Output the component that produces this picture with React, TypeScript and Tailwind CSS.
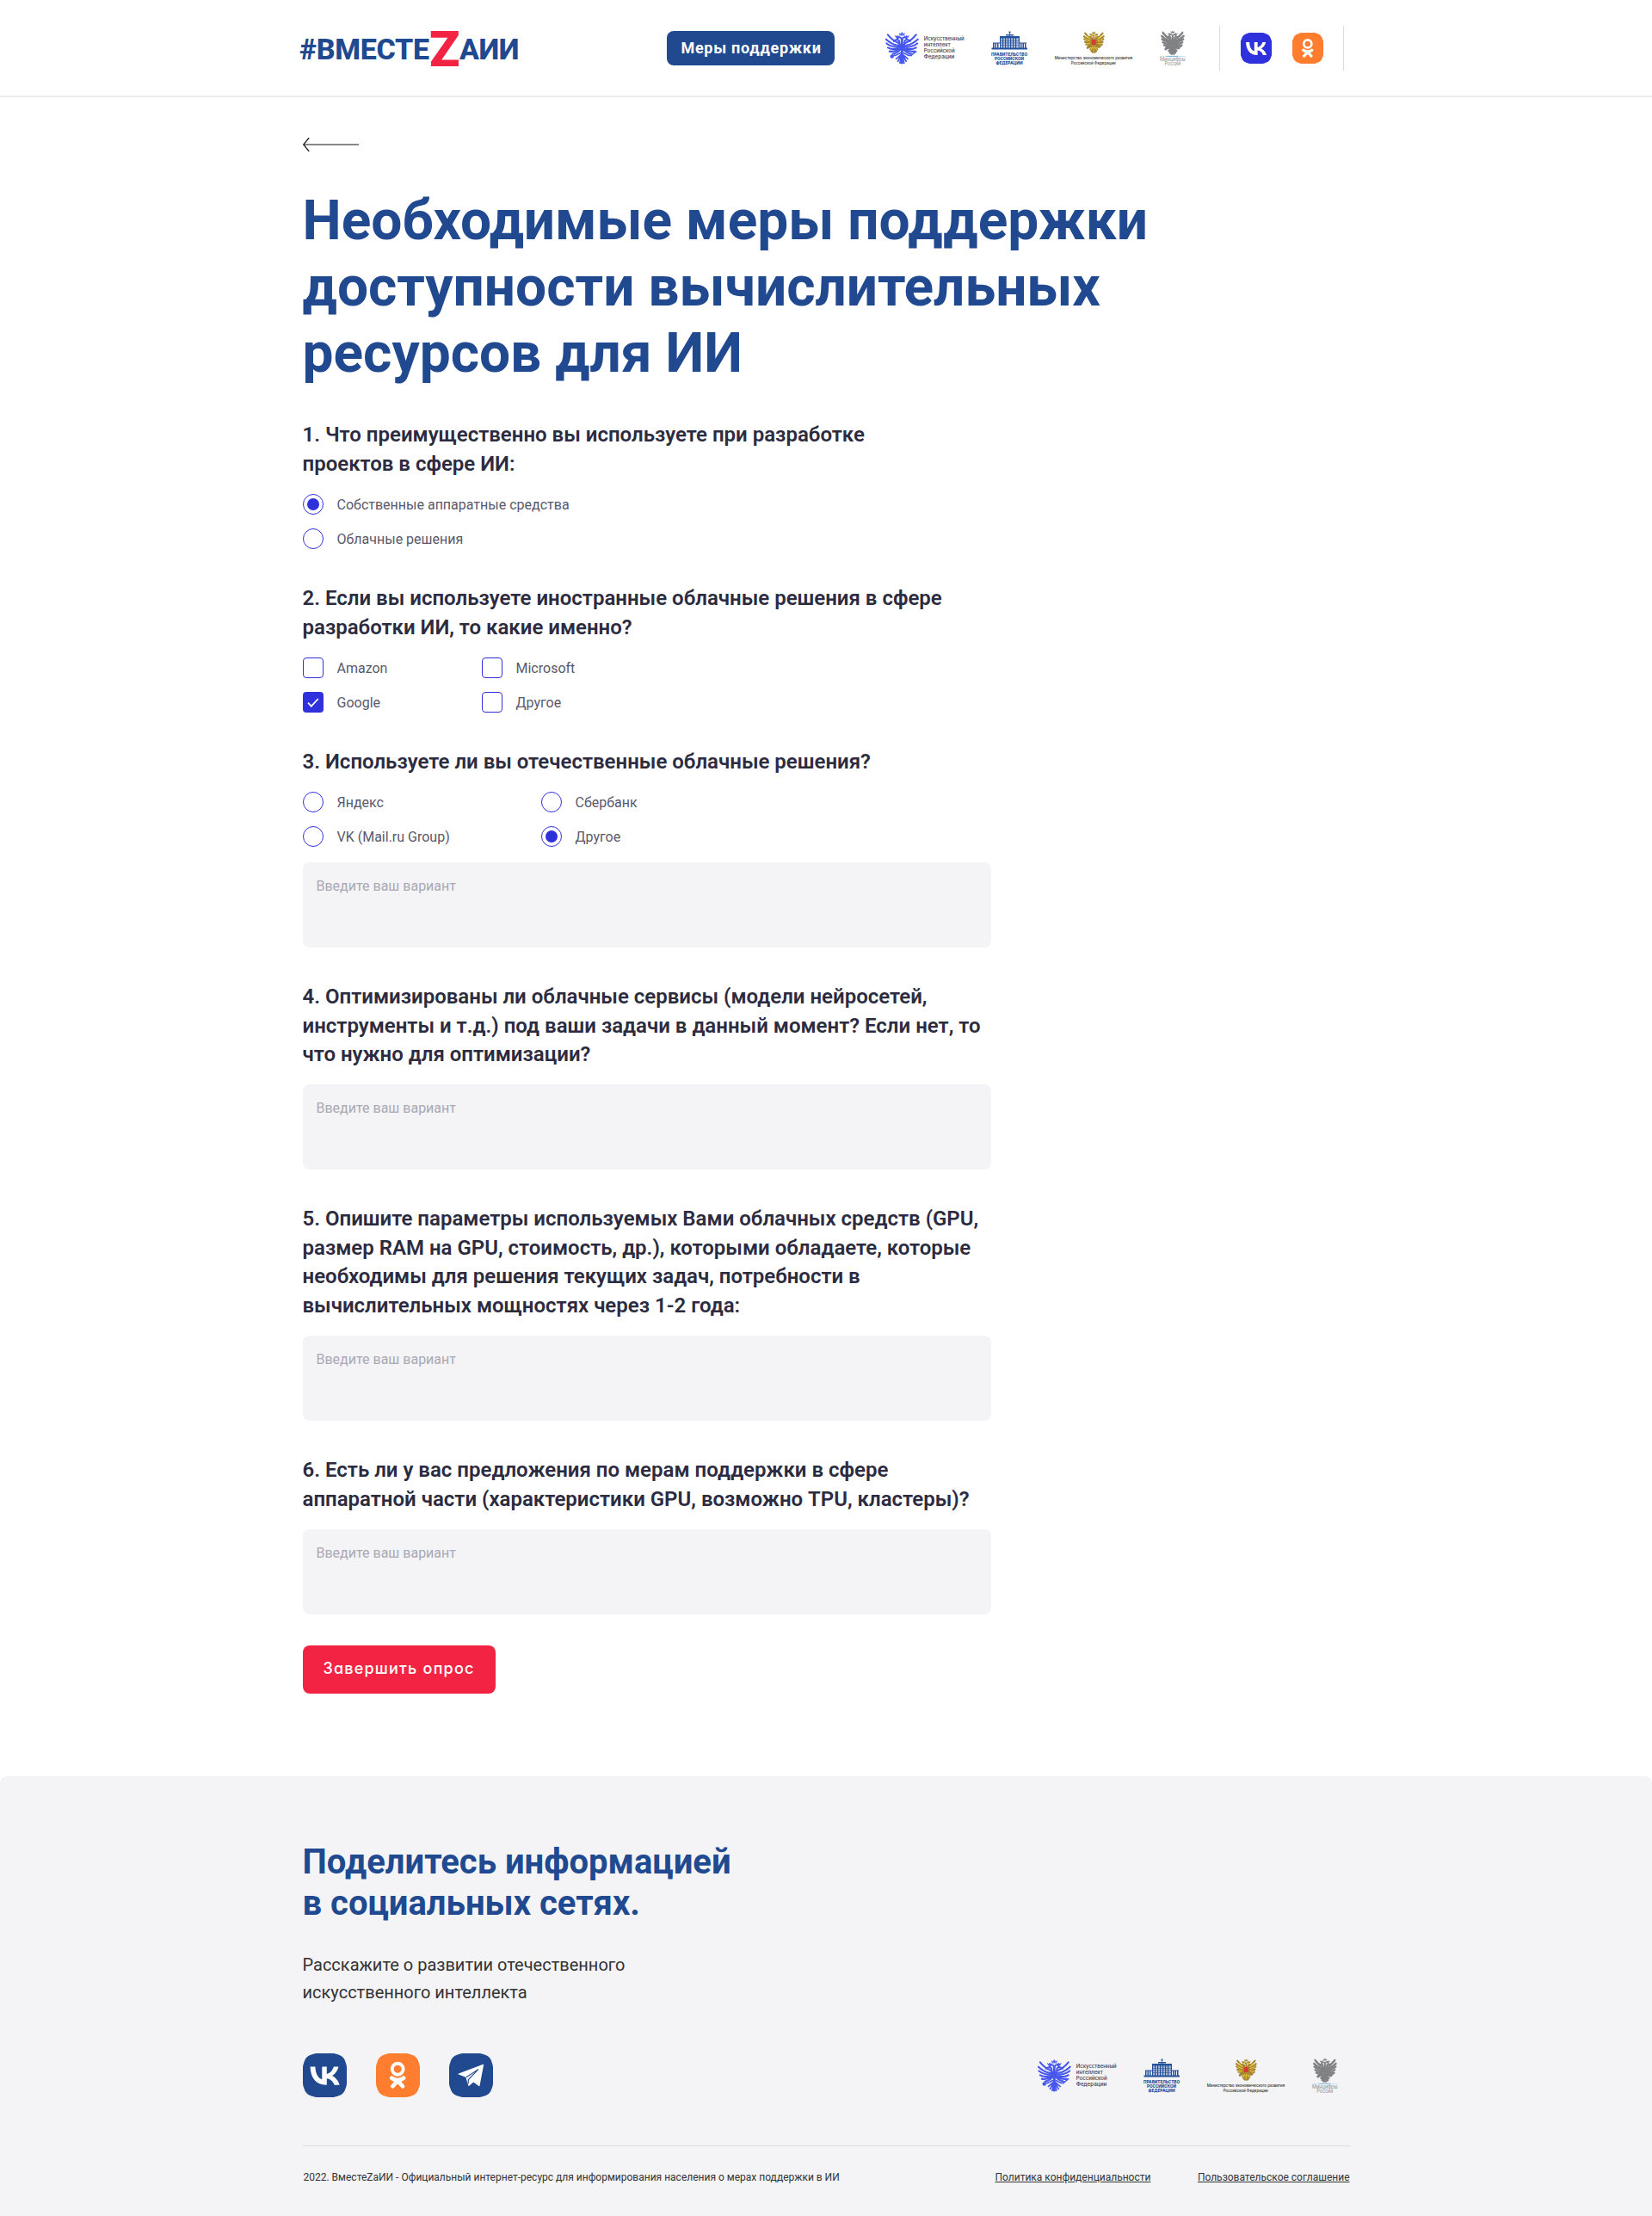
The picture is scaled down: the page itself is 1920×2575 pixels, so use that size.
import React from "react";

const FEATHERS: [number, number, number, number][] = [
  [16, 14, 3, 4],
  [15, 17, 1, 9.5],
  [15, 19, 1.5, 14.5],
  [15, 21, 3, 19.5],
  [16, 22, 5, 24],
  [17, 23, 9, 27],
];

/** Double-headed eagle emblem on a 40x40 grid. */
function Eagle({
  color,
  accent,
  center,
  bold,
}: {
  color: string;
  accent?: string;
  center?: string;
  bold?: boolean;
}) {
  const half = (
    <g>
      {FEATHERS.map(([x1, y1, x2, y2]) => (
        <path
          key={y2}
          d={`M${x1} ${y1}Q${(x1 + x2) / 2 - 1} ${(y1 + y2) / 2 + 2} ${x2} ${y2}`}
          fill="none"
          strokeWidth={bold ? 3.4 : 2.2}
        />
      ))}
      <path d="M17 22V13c0-2-1-3-3-3.200-2 .3-3 1-4 2M14 9.500c1-2.500 3.500-3 5-1.500l1 4" strokeWidth="2" fill="none" />
      <path d="M12 5.500l1 2h3l1-2-1.500.8-1-1.500-1 1.500z" strokeWidth=".8" />
      <path
        d="M18 26l-6 3-3 0M19 28l-6 5M19 29l-4 7M19.500 30l-2 8"
        strokeWidth={bold ? 3 : 1.8}
        fill="none"
      />
    </g>
  );
  return (
    <g stroke={color} fill={color} strokeLinecap="round">
      {half}
      <g transform="translate(40 0) scale(-1 1)">{half}</g>
      <path d="M17.500 4.500l-.8-2.200 1.800 1L20 1l1.500 2.300 1.800-1-.8 2.200z" strokeWidth=".6" />
      <path d="M20 13v25" strokeWidth="3" />
      <circle cx="8" cy="30" r="2.300" strokeWidth="0" />
      <path d="M31 29l6-5" strokeWidth="1.600" />
      {accent && (
        <path
          d="M12 14l-6-5M12 18l-8-3M12 22l-6 1M28 14l6-5M28 18l8-3M28 22l6 1M14 9l3-1M26 9l-3-1M17 29l-2 4M23 29l2 4M20 28v8"
          stroke={accent}
          strokeWidth="2"
        />
      )}
      {center ? (
        <rect x="16" y="15" width="8" height="9.500" rx="2" fill={center} strokeWidth="0" />
      ) : (
        <path d="M16.500 15.500h7v5.500l-3.500 3-3.500-3z" strokeWidth="1" />
      )}
    </g>
  );
}

function Logos() {
  return (
    <div className="flex h-[44px] w-[350px] items-start font-[Inter]">
      <svg className="h-[44px] w-[94px] shrink-0 overflow-visible" viewBox="0 0 94 44">
        <g transform="translate(1 1.500) scale(.965)">
          <Eagle color="#4657ee" />
        </g>
        <g fill="#3c3c4c" fontSize="6.200" fontWeight="500">
          <text x="45.700" y="12" textLength="47" lengthAdjust="spacingAndGlyphs">Искусственный</text>
          <text x="45.700" y="19" textLength="31" lengthAdjust="spacingAndGlyphs">интеллект</text>
          <text x="45.700" y="25.800" textLength="36" lengthAdjust="spacingAndGlyphs">Российской</text>
          <text x="45.700" y="32.500" textLength="35.500" lengthAdjust="spacingAndGlyphs">Федерации</text>
        </g>
      </svg>
      <svg className="ml-[29px] h-[44px] w-[44px] shrink-0 overflow-visible" viewBox="0 0 44 44">
        <g fill="#24519b">
          <path d="M21.500 1.500h2v2h-2zM22 3h.8v4H22zM18 5h9v1.600h-9zM11 7h23v2H11z" />
          <path d="M11 9h23v12H11z" opacity=".3" />
          <path d="M11 9.500h23v.7H11zM11 12h23v.7H11zM11 14.500h23v.7H11zM11 17h23v.7H11z" opacity=".75" />
          {[11, 14, 17, 20, 23, 26, 29, 32.8].map((x) => (
            <rect key={x} x={x} y="9" width="1.200" height="12" />
          ))}
          {[3, 5.5, 8, 35, 37.5, 40].map((x) => (
            <rect key={x} x={x} y="15" width="1.500" height="6" />
          ))}
          <path d="M3 14.500h8v1H3zM34 14.500h8v1h-8zM1.500 20.500h41.500v2H1.500z" />
        </g>
        <g fill="#24519b" fontSize="5.400" fontWeight="800">
          <text x="1" y="29.500" textLength="42" lengthAdjust="spacingAndGlyphs">ПРАВИТЕЛЬСТВО</text>
          <text x="5" y="34.900" textLength="34" lengthAdjust="spacingAndGlyphs">РОССИЙСКОЙ</text>
          <text x="6.500" y="40.200" textLength="31" lengthAdjust="spacingAndGlyphs">ФЕДЕРАЦИИ</text>
        </g>
      </svg>
      <svg className="ml-[29px] h-[44px] w-[94px] shrink-0 overflow-visible" viewBox="0 0 94 44">
        <g transform="translate(35.300 1) scale(.6 .65)">
          <Eagle color="#a58430" accent="#e8c330" center="#dc3931" bold />
        </g>
        <g fill="#333" fontSize="4.800" fontWeight="500">
          <text x="1.700" y="34" textLength="90.500" lengthAdjust="spacingAndGlyphs">Министерство экономического развития</text>
          <text x="20.700" y="39.700" textLength="52" lengthAdjust="spacingAndGlyphs">Российской Федерации</text>
        </g>
      </svg>
      <svg className="ml-[30px] h-[44px] w-[31px] shrink-0 overflow-visible" viewBox="0 0 31 44">
        <g transform="translate(1.500 0) scale(.67 .73)">
          <Eagle color="#808184" bold />
        </g>
        <path d="M.5 30.400h29" stroke="#c3e3f2" />
        <path d="M7.500 30.400h14" stroke="#7eb5d8" />
        <g fill="#8d8e91" fontSize="5.600">
          <text x="0" y="36.300" textLength="29.500" lengthAdjust="spacingAndGlyphs">Минцифры</text>
          <text x="5.500" y="41.200" textLength="18.500" lengthAdjust="spacingAndGlyphs">России</text>
        </g>
      </svg>
    </div>
  );
}

const SQUIRCLE = "M0 24C0 3.500 3.500 0 24 0S48 3.500 48 24 44.500 48 24 48 0 44.500 0 24Z";

function Tile({ fill }: { fill: string }) {
  return (
    <g fill={fill}>
      <rect x="0" y="6" width="48" height="36" rx="9" />
      <rect x="6" y="0" width="36" height="48" rx="9" />
      <path d={SQUIRCLE} />
    </g>
  );
}

function VkIcon({ className, fill }: { className: string; fill: string }) {
  return (
    <svg className={className} viewBox="0 0 48 48">
      <Tile fill={fill} />
      <path
        fill="#fff"
        d="M25.540 34.580C14.600 34.580 8.360 27.080 8.100 14.600h5.480c.18 9.160 4.220 13.040 7.420 13.840V14.600h5.160v7.900c3.160-.34 6.480-3.940 7.600-7.900h5.160c-.86 4.880-4.460 8.480-7.020 9.960 2.560 1.200 6.660 4.340 8.220 10.020h-5.680c-1.220-3.800-4.260-6.740-8.280-7.140v7.140z"
      />
    </svg>
  );
}

function OkIcon({ className }: { className: string }) {
  return (
    <svg className={className} viewBox="0 0 52 52">
      <g transform="scale(1.0833)">
        <Tile fill="#ff7d2e" />
      </g>
      <g fill="none" stroke="#fff" strokeLinecap="round">
        <circle cx="25.700" cy="18.600" r="6.600" strokeWidth="3.900" />
        <path d="M18.700 29.300c4.500 3.300 9.500 3.300 14 0" strokeWidth="5" />
        <path d="M25.700 32.500l-5.900 6.500M25.700 32.500l5.900 6.500" strokeWidth="4.800" />
      </g>
    </svg>
  );
}

function TelegramIcon({ className }: { className: string }) {
  return (
    <svg className={className} viewBox="0 0 52 52">
      <g transform="scale(1.0833)">
        <Tile fill="#20498f" />
      </g>
      <path
        fill="#fff"
        d="M11.200 23.900 40.200 13.100c.5-.2.8.1.700.6L36.200 38.500c-.1.600-.6.700-1 .3l-6.500-4.600-5 4.200c-.5.400-.9.300-1.100-.3L19.700 28.400l-8.500-3.300c-.7-.3-.7-.9 0-1.200z"
      />
      <path d="M20.200 28.300 34.500 19 22.800 31.200 22.500 36.500" fill="none" stroke="#20498f" strokeWidth="1.100" />
    </svg>
  );
}

function Radio({ label, checked }: { label: string; checked?: boolean }) {
  return (
    <label className="flex h-6 items-center gap-4">
      <span className="flex size-6 items-center justify-center rounded-full border border-[#2f31dc]">
        {checked && <span className="size-[14px] rounded-full bg-[#2f31dc]" />}
      </span>
      <span className="pt-px text-base text-[#5a596b]">{label}</span>
    </label>
  );
}

function Checkbox({ label, checked }: { label: string; checked?: boolean }) {
  return (
    <label className="flex h-6 items-center gap-4">
      <span
        className={
          checked
            ? "flex size-6 items-center justify-center rounded-[4px] bg-[#2f31dc]"
            : "size-6 rounded-[4px] border border-[#2f31dc]"
        }
      >
        {checked && (
          <svg className="size-6" viewBox="0 0 24 24">
            <path d="M6 12.700l3.800 4 8-8.700" fill="none" stroke="#fff" strokeWidth="1.700" />
          </svg>
        )}
      </span>
      <span className="pt-px text-base text-[#5a596b]">{label}</span>
    </label>
  );
}

function Heading({ lines, className }: { lines: string[]; className: string }) {
  return (
    <h2 className={`pt-px text-2xl leading-[33.600px] font-semibold whitespace-nowrap text-[#2c2b40] ${className}`}>
      {lines.map((l) => (
        <span key={l} className="block">
          {l}
        </span>
      ))}
    </h2>
  );
}

function Answer() {
  return (
    <textarea
      placeholder="Введите ваш вариант"
      className="block h-[99px] w-[800px] resize-none rounded-lg bg-[#f4f4f7] px-4 py-4 text-base leading-6 outline-none placeholder:text-[#a9a8b3]"
    />
  );
}

export default function App() {
  return (
    <div className="min-h-[2575px] w-full bg-white font-[Roboto,sans-serif]">
      <header className="h-[113px] border-b-2 border-[#ececec]">
        <div className="mx-auto flex w-[1224px] items-start">
          <a className="mt-[28px] flex h-[58px] w-[427px] items-center text-[34px] leading-[58px] font-extrabold text-[#20498f]">
            <span className="w-[152px] tracking-[-0.3px]">#ВМЕСТЕ</span>
            <span className="w-[34px] text-[58px] font-black text-[#f32443]">
              <span className="-ml-px block">Z</span>
            </span>
            <span className="tracking-[-0.4px]">АИИ</span>
          </a>
          <button className="mt-9 h-10 w-[195px] rounded-lg bg-[#20498f] pl-px text-lg font-bold tracking-[0.72px] whitespace-nowrap text-white">
            Меры поддержки
          </button>
          <div className="mt-[35px] ml-[58px]">
            <Logos />
          </div>
          <div className="mt-[30px] ml-[39px] flex h-[52px] w-[145px] items-start gap-6 border-x border-[#dcdcdc] pt-2 pl-6">
            <VkIcon className="size-[36px]" fill="#2f31dc" />
            <OkIcon className="size-[36px]" />
          </div>
        </div>
      </header>

      <main className="mx-auto flex h-[1951px] w-[1217px] flex-col items-start">
        <svg className="mt-[47px] h-4 w-[65px]" viewBox="0 0 65 16">
          <path d="M.7 8H65" stroke="#111" fill="none" />
          <path d="M7.200 0L.7 8l6.500 8" stroke="#111" strokeWidth="1.200" fill="none" />
        </svg>
        <h1 className="mt-[42px] h-[270px] pt-px text-[64px] leading-[76.800px] font-bold whitespace-nowrap text-[#20498f]">
          Необходимые меры поддержки
          <br />
          доступности вычислительных
          <br />
          ресурсов для ИИ
        </h1>

        <Heading
          className="h-[86px]"
          lines={["1. Что преимущественно вы используете при разработке", "проектов в сфере ИИ:"]}
        />
        <div className="mb-10 flex flex-col gap-4">
          <Radio label="Собственные аппаратные средства" checked />
          <Radio label="Облачные решения" />
        </div>

        <Heading
          className="h-[86px]"
          lines={["2. Если вы используете иностранные облачные решения в сфере", "разработки ИИ, то какие именно?"]}
        />
        <div className="mb-10 grid grid-cols-[208px_208px] gap-y-4">
          <Checkbox label="Amazon" />
          <Checkbox label="Microsoft" />
          <Checkbox label="Google" checked />
          <Checkbox label="Другое" />
        </div>

        <Heading className="h-[52px]" lines={["3. Используете ли вы отечественные облачные решения?"]} />
        <div className="mb-[18px] grid grid-cols-[277px_277px] gap-y-4">
          <Radio label="Яндекс" />
          <Radio label="Сбербанк" />
          <Radio label="VK (Mail.ru Group)" />
          <Radio label="Другое" checked />
        </div>
        <Answer />

        <Heading
          className="mt-10 h-[119px]"
          lines={[
            "4. Оптимизированы ли облачные сервисы (модели нейросетей,",
            "инструменты и т.д.) под ваши задачи в данный момент? Если нет, то",
            "что нужно для оптимизации?",
          ]}
        />
        <Answer />

        <Heading
          className="mt-10 h-[153px]"
          lines={[
            "5. Опишите параметры используемых Вами облачных средств (GPU,",
            "размер RAM на GPU, стоимость, др.), которыми обладаете, которые",
            "необходимы для решения текущих задач, потребности в",
            "вычислительных мощностях через 1-2 года:",
          ]}
        />
        <Answer />

        <Heading
          className="mt-10 h-[86px]"
          lines={["6. Есть ли у вас предложения по мерам поддержки в сфере", "аппаратной части (характеристики GPU, возможно TPU, кластеры)?"]}
        />
        <Answer />

        <button className="mt-9 h-14 w-[224px] rounded-lg bg-[#f32443] pb-[3px] font-[Inter] text-lg font-medium tracking-[1.200px] whitespace-nowrap text-white [font-feature-settings:'cv11']">
          Завершить опрос
        </button>
      </main>

      <footer className="h-[511px] rounded-t-lg bg-[#f4f4f7]">
        <div className="mx-auto w-[1217px] pt-[76px]">
          <h3 className="text-[40px] leading-[48px] font-bold text-[#20498f]">
            Поделитесь информацией
            <br />
            в социальных сетях.
          </h3>
          <p className="mt-[31px] text-xl leading-8 text-[#333]">
            Расскажите о развитии отечественного
            <br />
            искусственного интеллекта
          </p>
          <div className="mt-[55px] flex h-[52px] items-start justify-between">
            <div className="flex gap-[34px]">
              <VkIcon className="size-[51px]" fill="#20498f" />
              <OkIcon className="size-[51px]" />
              <TelegramIcon className="size-[51px]" />
            </div>
            <div className="mt-[5px] mr-[14px]">
              <Logos />
            </div>
          </div>
          <div className="mt-[55px] h-px bg-[#dcdce0]" />
          <div className="mt-[28px] flex text-xs leading-4 whitespace-nowrap text-[#333]">
            <span className="ml-px w-[804px]">
              2022. ВместеZаИИ - Официальный интернет-ресурс для информирования населения о мерах поддержки в ИИ
            </span>
            <a className="underline">Политика конфиденциальности</a>
            <a className="ml-auto underline">Пользовательское соглашение</a>
          </div>
        </div>
      </footer>
    </div>
  );
}
